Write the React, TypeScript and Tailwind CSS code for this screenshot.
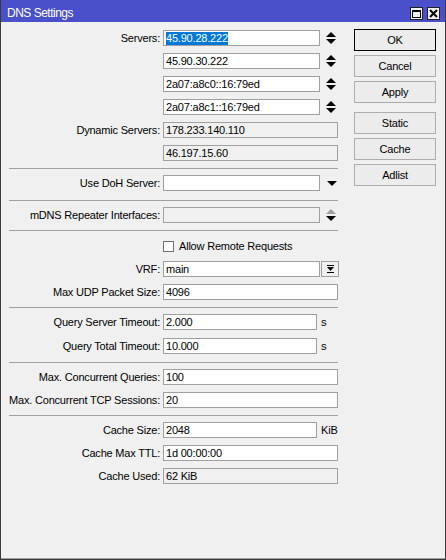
import React from 'react';

const font = "font-['Liberation_Sans',Arial,sans-serif]";

function Label({ text }: { text?: string }) {
  return (
    <div className="w-[154px] shrink-0 flex justify-end pr-[3px] whitespace-nowrap">
      {text ?? ''}
    </div>
  );
}

function Field({
  w,
  value,
  disabled,
  selected,
}: {
  w: string;
  value?: string;
  disabled?: boolean;
  selected?: boolean;
}) {
  return (
    <div
      className={`${w} h-[16px] shrink-0 flex items-center border border-[#a0a0a0] pl-[2px] whitespace-nowrap overflow-hidden ${
        disabled ? 'bg-[#f0f0f0]' : 'bg-white'
      }`}
    >
      {selected ? <span className="bg-[#0078d7] text-white leading-[13px]">{value}</span> : value}
    </div>
  );
}

function UpDown({ dim }: { dim?: boolean }) {
  return (
    <svg width="10" height="12" viewBox="0 0 10 12" className="ml-[6px] shrink-0">
      <polygon points="0,5 5,0 10,5" fill={dim ? '#a0a0a0' : '#000'} />
      <polygon points="0,7 10,7 5,12" fill="#000" />
    </svg>
  );
}

function Down() {
  return (
    <svg width="10" height="5" viewBox="0 0 10 5" className="ml-[7px] shrink-0">
      <polygon points="0,0 10,0 5,5" fill="#000" />
    </svg>
  );
}

function Sep({ mt }: { mt: string }) {
  return <div className={`${mt} w-[329px] h-px bg-[#a0a0a0] shrink-0`} />;
}

function Row({ mt, children }: { mt: string; children: React.ReactNode }) {
  return <div className={`${mt} h-[16px] flex items-center shrink-0`}>{children}</div>;
}

function Btn({ text, primary, mt }: { text: string; primary?: boolean; mt?: string }) {
  return (
    <div
      className={`${mt ?? ''} w-[82px] h-[22px] flex items-center justify-center bg-[#ececec] border ${
        primary ? 'border-black' : 'border-[#adadad]'
      }`}
    >
      {text}
    </div>
  );
}

export default function App() {
  return (
    <div className={`${font} w-[446px] h-[560px] flex flex-col bg-[#f0f0f0] border-x border-b border-[#3a3a3a] text-[11px] tracking-[-0.2px] text-black`}>
      {/* title bar */}
      <div className="h-[22px] shrink-0 bg-[#4a4fca] flex items-start justify-between pl-[6px] pr-[5px]">
        <div className="pt-[6px] text-[12px] tracking-[-0.5px] text-white leading-[14px]">DNS Settings</div>
        <div className="flex gap-[4px] pt-[7px]">
          <div className="w-[13px] h-[13px] bg-[#f0f0f0] border border-[#202020] flex items-center justify-center">
            <div className="w-[9px] h-[8px] border border-black border-t-2" />
          </div>
          <div className="w-[13px] h-[13px] bg-[#f0f0f0] border border-[#202020] flex items-center justify-center">
            <svg width="9" height="9" viewBox="0 0 9 9">
              <path d="M1 1 L8 8 M8 1 L1 8" stroke="#000" strokeWidth="2" />
            </svg>
          </div>
        </div>
      </div>

      <div className="flex-1 flex border-b border-[#a0a0a0]">
        {/* form */}
        <div className="w-[352px] shrink-0 flex flex-col pt-[8px] pl-[8px]">
          <Row mt="mt-0">
            <Label text="Servers:" />
            <Field w="w-[157px]" value="45.90.28.222" selected />
            <UpDown />
          </Row>
          <Row mt="mt-[7px]">
            <Label />
            <Field w="w-[157px]" value="45.90.30.222" />
            <UpDown />
          </Row>
          <Row mt="mt-[7px]">
            <Label />
            <Field w="w-[157px]" value="2a07:a8c0::16:79ed" />
            <UpDown />
          </Row>
          <Row mt="mt-[7px]">
            <Label />
            <Field w="w-[157px]" value="2a07:a8c1::16:79ed" />
            <UpDown />
          </Row>
          <Row mt="mt-[7px]">
            <Label text="Dynamic Servers:" />
            <Field w="w-[175px]" value="178.233.140.110" disabled />
          </Row>
          <Row mt="mt-[7px]">
            <Label />
            <Field w="w-[175px]" value="46.197.15.60" disabled />
          </Row>

          <Sep mt="mt-[7px]" />
          <Row mt="mt-[6px]">
            <Label text="Use DoH Server:" />
            <Field w="w-[157px]" />
            <Down />
          </Row>

          <Sep mt="mt-[9px]" />
          <Row mt="mt-[6px]">
            <Label text="mDNS Repeater Interfaces:" />
            <Field w="w-[157px]" disabled />
            <UpDown dim />
          </Row>

          <Sep mt="mt-[7px]" />
          <Row mt="mt-[7px]">
            <Label />
            <div className="w-[11px] h-[11px] bg-white border border-[#707070] shrink-0" />
            <span className="ml-[5px] whitespace-nowrap">Allow Remote Requests</span>
          </Row>
          <Row mt="mt-[7px]">
            <Label text="VRF:" />
            <Field w="w-[157px]" value="main" />
            <div className="ml-px w-[18px] h-[16px] shrink-0 border border-[#a0a0a0] bg-[#f0f0f0] flex items-center justify-center">
              <svg width="7" height="8" viewBox="0 0 7 8">
                <rect x="0" y="0" width="7" height="1" fill="#000" />
                <polygon points="0,2 7,2 3.5,6" fill="#000" />
                <rect x="0" y="7" width="7" height="1" fill="#000" />
              </svg>
            </div>
          </Row>
          <Row mt="mt-[7px]">
            <Label text="Max UDP Packet Size:" />
            <Field w="w-[175px]" value="4096" />
          </Row>

          <Sep mt="mt-[7px]" />
          <Row mt="mt-[6px]">
            <Label text="Query Server Timeout:" />
            <Field w="w-[154px]" value="2.000" />
            <span className="ml-[4px]">s</span>
          </Row>
          <Row mt="mt-[8px]">
            <Label text="Query Total Timeout:" />
            <Field w="w-[154px]" value="10.000" />
            <span className="ml-[4px]">s</span>
          </Row>

          <Sep mt="mt-[8px]" />
          <Row mt="mt-[6px]">
            <Label text="Max. Concurrent Queries:" />
            <Field w="w-[175px]" value="100" />
          </Row>
          <Row mt="mt-[7px]">
            <Label text="Max. Concurrent TCP Sessions:" />
            <Field w="w-[175px]" value="20" />
          </Row>

          <Sep mt="mt-[7px]" />
          <Row mt="mt-[6px]">
            <Label text="Cache Size:" />
            <Field w="w-[154px]" value="2048" />
            <span className="ml-[4px]">KiB</span>
          </Row>
          <Row mt="mt-[7px]">
            <Label text="Cache Max TTL:" />
            <Field w="w-[175px]" value="1d 00:00:00" />
          </Row>
          <Row mt="mt-[7px]">
            <Label text="Cache Used:" />
            <Field w="w-[175px]" value="62 KiB" disabled />
          </Row>
        </div>

        {/* buttons */}
        <div className="ml-[1px] flex flex-col gap-[4px] pt-[7px]">
          <Btn text="OK" primary />
          <Btn text="Cancel" />
          <Btn text="Apply" />
          <Btn text="Static" mt="mt-[5px]" />
          <Btn text="Cache" />
          <Btn text="Adlist" />
        </div>
      </div>
    </div>
  );
}
